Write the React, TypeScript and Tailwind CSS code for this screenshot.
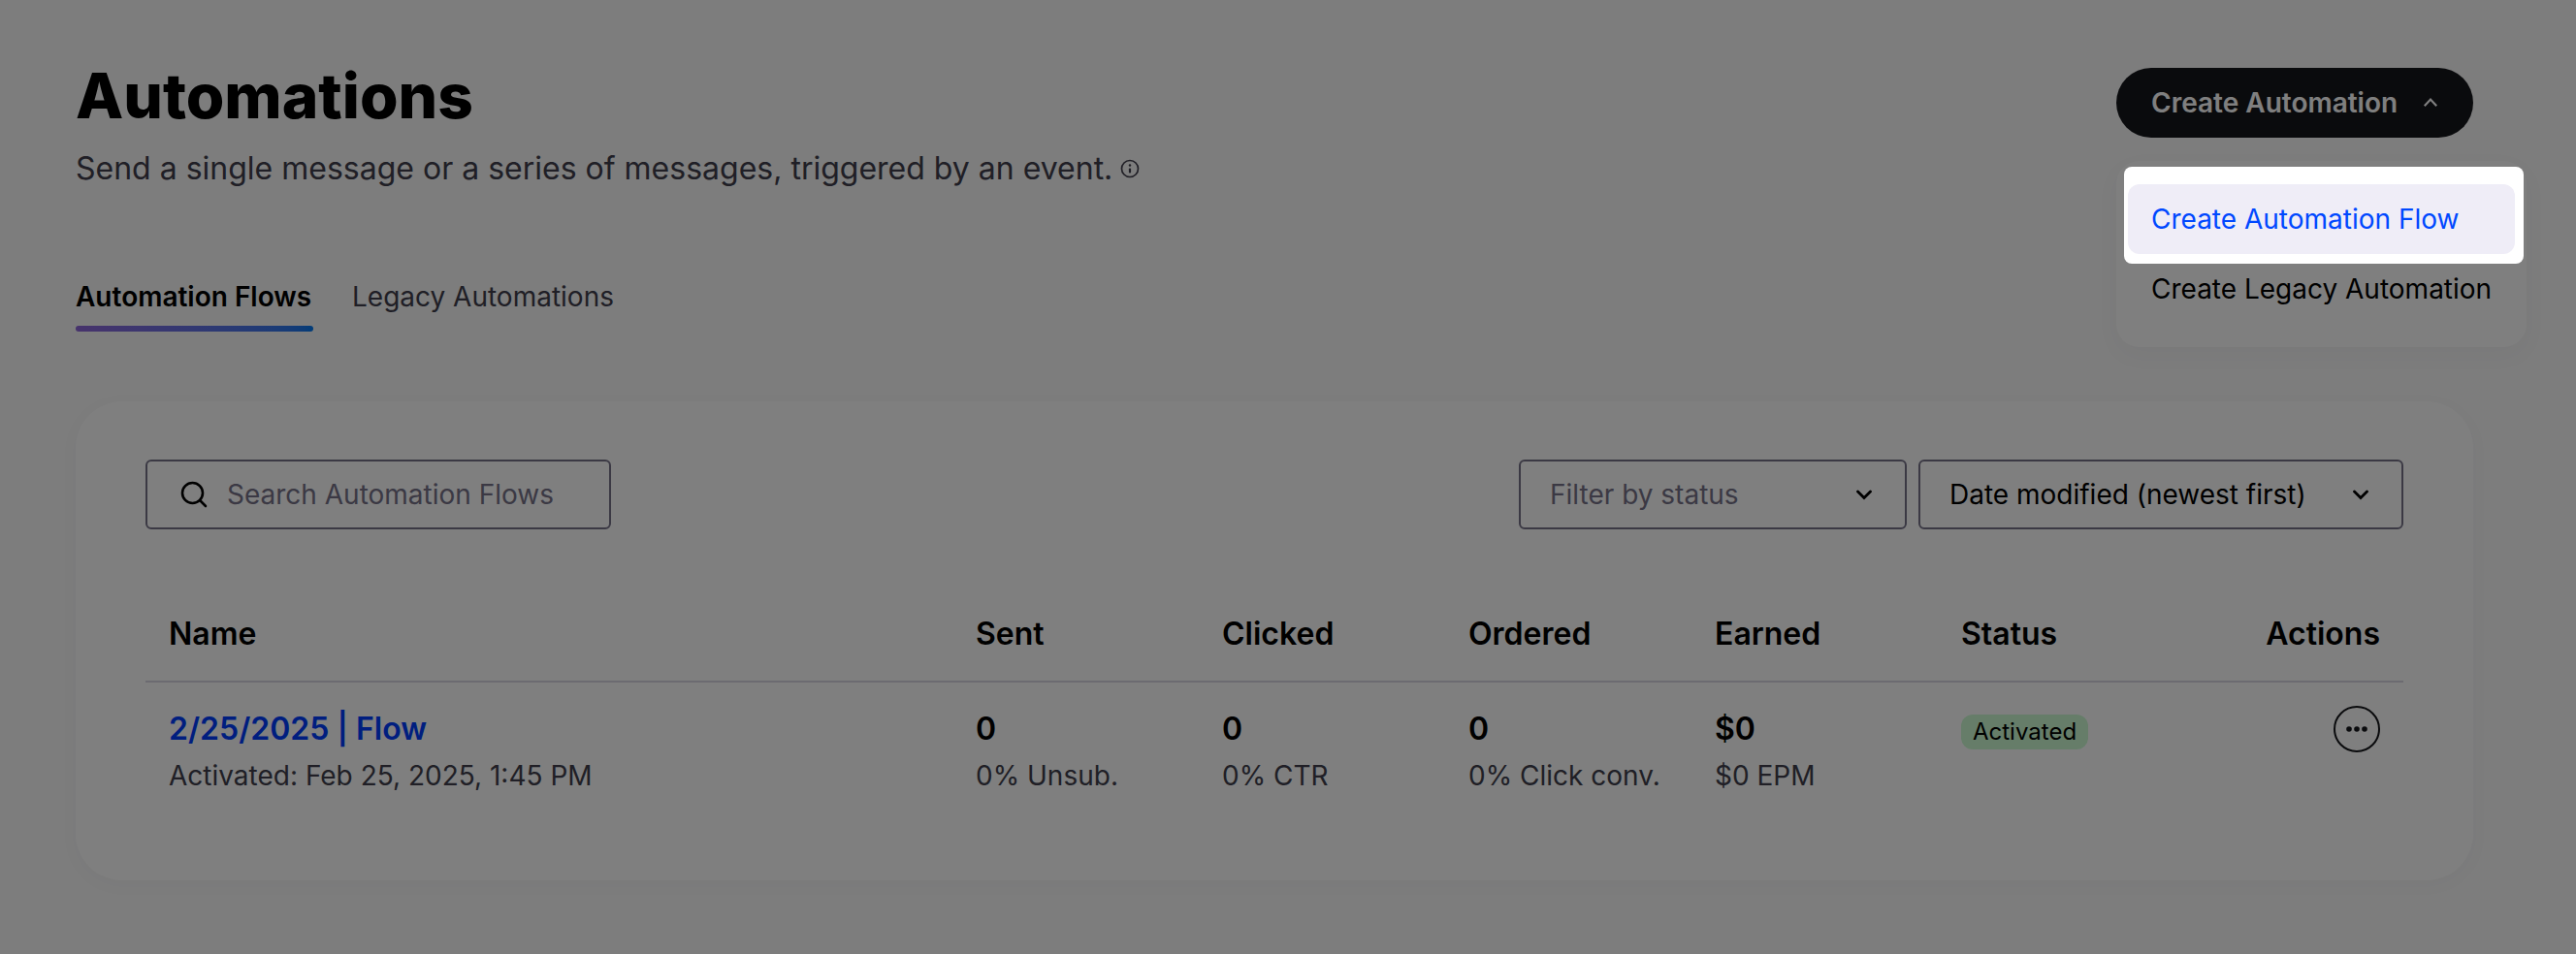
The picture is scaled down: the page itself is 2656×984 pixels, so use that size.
import type { ReactNode } from "react";

function Chevron({ up = false }: { up?: boolean }) {
  return up ? (
    <svg className="h-6 w-6 shrink-0" viewBox="0 0 24 24" fill="none" stroke="currentColor" strokeWidth="2.2" aria-hidden="true">
      <path d="M5.8 15.2 12 8.600l6.2 6.600" />
    </svg>
  ) : (
    <svg className="h-6 w-6" viewBox="0 0 24 24" fill="none" stroke="currentColor" strokeWidth="2.8" strokeLinecap="round" aria-hidden="true">
      <path d="m5.5 9 6.500 6.500L18.500 9" />
    </svg>
  );
}

function Picker({ label, className, children }: { label: string; className: string; children: ReactNode }) {
  return (
    <div className="relative flex items-center">
      <select
        aria-label={label}
        className={`h-[72px] appearance-none rounded-md border-2 border-[#777389] bg-transparent pl-[30px] pr-16 text-[28px] ${className}`}
      >
        {children}
      </select>
      <span className="pointer-events-none absolute right-8">
        <Chevron />
      </span>
    </div>
  );
}

const stats = [
  { head: "Sent", value: "0", note: "0% Unsub." },
  { head: "Clicked", value: "0", note: "0% CTR" },
  { head: "Ordered", value: "0", note: "0% Click conv." },
  { head: "Earned", value: "$0", note: "$0 EPM" },
];

function CreateMenu() {
  return (
    <div className="relative mt-[10px]">
      <button
        type="button"
        aria-expanded="true"
        className="flex h-[72px] w-[368px] items-center justify-between rounded-full bg-[#15161a] pl-9 pr-8 text-[28px] font-semibold text-white"
      >
        Create Automation
        <Chevron up />
      </button>
      <div className="absolute left-0 top-24 w-[423px] rounded-3xl bg-white px-3 py-6 text-[28px] shadow-[0_8px_24px_rgba(60,50,90,0.04)]">
        <div className="absolute left-2 top-[6px] h-[100px] w-[412px] rounded-lg shadow-[0_0_0_4000px_rgba(0,0,0,0.5)]" />
        <button type="button" className="flex h-[72px] w-full items-center rounded-xl bg-[#efedf7] px-6 text-[#0048ff]">
          Create Automation Flow
        </button>
        <button type="button" className="flex h-[72px] w-full items-center whitespace-nowrap rounded-xl px-6">
          Create Legacy Automation
        </button>
      </div>
    </div>
  );
}

export default function App() {
  return (
    <div className="min-h-screen overflow-hidden bg-[#fafafa] pb-[76px] pl-[78px] pr-[106px] pt-[60px] font-['Inter',sans-serif] text-black">
      <header className="relative z-10 flex items-start justify-between">
        <div>
          <h1 className="text-[64px] font-extrabold leading-[78px]">Automations</h1>
          <p className="mt-3 flex items-center gap-2 text-[32px] leading-[48px] text-[#403e4c]">
            Send a single message or a series of messages, triggered by an event.
            <svg className="h-5 w-5" viewBox="0 0 20 20" fill="none" aria-hidden="true">
              <circle cx="10" cy="10" r="8.500" stroke="currentColor" strokeWidth="1.700" />
              <circle cx="10" cy="6.500" r="1.200" fill="currentColor" />
              <path d="M10 10.500v3" stroke="currentColor" strokeWidth="2.200" strokeLinecap="round" />
            </svg>
          </p>
        </div>
        <CreateMenu />
      </header>

      <nav className="mt-[90px] flex gap-10 text-[28px] leading-9" aria-label="Automation types">
        <button type="button" className="min-w-[245px] text-left font-semibold">
          Automation Flows
          <span className="mt-3 block h-[6px] rounded-full bg-linear-to-r from-[#8e66d8] to-[#0078f0]" />
        </button>
        <button type="button" className="self-start text-[#403e4c]">
          Legacy Automations
        </button>
      </nav>

      <main className="mt-[72px] rounded-[48px] bg-white px-[72px] py-[60px] shadow-[0_4px_20px_rgba(60,50,90,0.03)]">
        <div className="flex items-center justify-between">
          <label className="flex h-[72px] w-[480px] items-center gap-5 rounded-md border-2 border-[#777389] pl-[34px] pr-6">
            <svg className="h-7 w-7 shrink-0" viewBox="0 0 28 28" fill="none" stroke="currentColor" strokeWidth="2.600" strokeLinecap="round" aria-hidden="true">
              <circle cx="12.500" cy="12.500" r="10.500" />
              <path d="m20.500 20.500 5.500 5.500" />
            </svg>
            <input
              type="search"
              aria-label="Search Automation Flows"
              placeholder="Search Automation Flows"
              className="w-full min-w-0 bg-transparent text-[28px] placeholder:text-[#777389]"
            />
          </label>
          <div className="flex gap-3">
            <Picker label="Filter by status" className="w-[400px] text-[#777389]">
              <option>Filter by status</option>
            </Picker>
            <Picker label="Sort by" className="w-[500px]">
              <option>Date modified (newest first)</option>
            </Picker>
          </div>
        </div>

        <table className="mt-[60px] w-full table-fixed border-separate border-spacing-0 text-left">
          <thead>
            <tr className="text-[32px] leading-[48px] *:border-b-2 *:border-[#d8d6e2] *:px-6 *:py-6 *:font-semibold">
              <th>Name</th>
              {stats.map((s) => (
                <th key={s.head} className="w-[254px]">
                  {s.head}
                </th>
              ))}
              <th className="w-[254px]">Status</th>
              <th className="w-[226px] text-right">Actions</th>
            </tr>
          </thead>
          <tbody>
            <tr className="align-top leading-[48px]">
              <td className="px-6 py-6">
                <a href="#flow" className="block text-[32px] font-semibold text-[#003cff]">
                  2/25/2025 | Flow
                </a>
                <p className="text-[28px] text-[#403e4c]">Activated: Feb 25, 2025, 1:45 PM</p>
              </td>
              {stats.map((s) => (
                <td key={s.head} className="whitespace-nowrap px-6 py-6">
                  <p className="text-[32px] font-semibold">{s.value}</p>
                  <p className="text-[28px] text-[#403e4c]">{s.note}</p>
                </td>
              ))}
              <td className="px-6 py-6">
                <span className="mt-[9px] flex h-9 w-fit items-center rounded-xl bg-[#ccfbd2] px-3 text-2xl">Activated</span>
              </td>
              <td className="px-6 py-6">
                <button
                  type="button"
                  aria-label="More actions"
                  className="ml-auto flex h-12 w-12 items-center justify-center rounded-full border-2 border-[#15161a] text-[#15161a]"
                >
                  <svg className="h-6 w-6" viewBox="0 0 24 24" fill="currentColor" aria-hidden="true">
                    <circle cx="4" cy="12" r="2.800" />
                    <circle cx="12" cy="12" r="2.800" />
                    <circle cx="20" cy="12" r="2.800" />
                  </svg>
                </button>
              </td>
            </tr>
          </tbody>
        </table>
      </main>
    </div>
  );
}
